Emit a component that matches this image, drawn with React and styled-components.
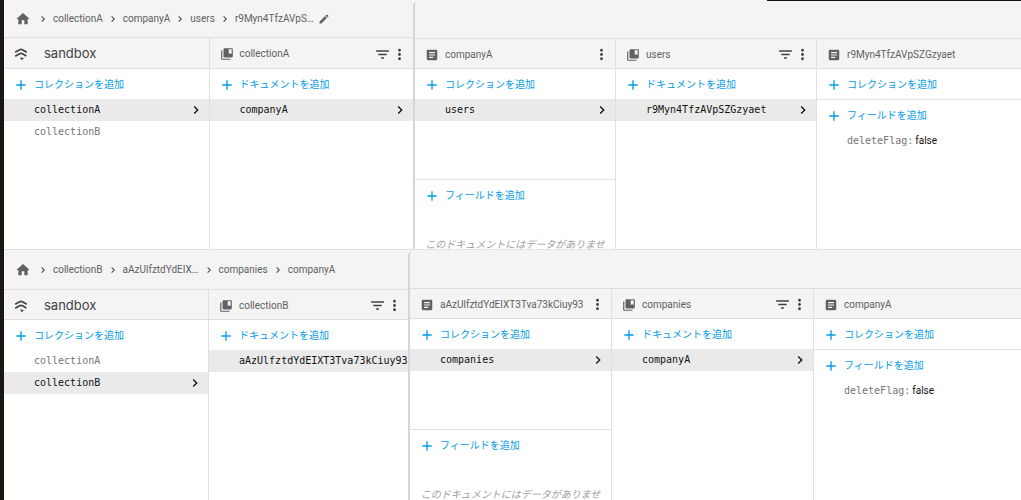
import React from "react";
import styled, { createGlobalStyle } from "styled-components";
import {
  MdAdd,
  MdArticle,
  MdChevronRight,
  MdCollectionsBookmark,
  MdEdit,
  MdFilterList,
  MdHome,
  MdMoreVert
} from "react-icons/md";

const GlobalStyle = createGlobalStyle`
  * {
    box-sizing: border-box;
  }

  body {
    margin: 0;
    background: #fff;
    color: #616161;
    font: 10px/16px Roboto, "Noto Sans CJK JP", sans-serif;
  }

  button {
    border: 0;
    padding: 0;
    background: none;
    color: inherit;
    font: inherit;
    cursor: pointer;
  }

  svg {
    display: block;
    flex: none;
  }
`;

const Page = styled.main`
  position: relative;
  display: grid;
  grid-template-rows: 1fr 1fr;
  height: 100vh;
  border-left: 4px solid #1c1613;
  overflow: hidden;
`;

const TopEdge = styled.div`
  position: absolute;
  top: 0;
  right: 0;
  width: 25%;
  height: 1px;
  background: #151215;
`;

const Row = styled.div`
  display: grid;
  grid-template-columns: ${props => props.$columns};
  min-height: 0;
  overflow: hidden;

  & + & {
    box-shadow: 0 -1px 0 #dfe1e3;
  }
`;

const Window = styled.section`
  display: flex;
  flex-direction: column;
  min-width: 0;
  min-height: 0;
  overflow: hidden;

  & + & {
    border-left: 2px solid #d3d7dc;
    border-top-left-radius: 5px;
  }
`;

const Toolbar = styled.nav`
  display: flex;
  align-items: center;
  gap: 4px;
  flex: none;
  height: ${props => props.$height}px;
  padding-left: 11px;
  border-bottom: 1px solid #dedede;
  background: #f4f4f4;

  a {
    color: #616161;
    text-decoration: none;
    white-space: nowrap;
  }

  .home {
    margin-right: 2px;
  }

  .separator {
    color: #424242;
  }
`;

const Columns = styled.div`
  display: grid;
  grid-template-columns: ${props => props.$columns};
  flex: 1;
  min-height: 0;
`;

const Column = styled.div`
  min-width: 0;
  overflow: hidden;

  & + & {
    border-left: 1px solid #e0e0e0;
  }
`;

const Header = styled.header`
  display: flex;
  align-items: center;
  height: ${props => props.$height}px;
  padding: 2px 5px 0 9px;
  border-bottom: 1px solid #dedede;
  background: #f4f4f4;
  white-space: nowrap;

  h2 {
    flex: 1;
    margin: 0;
    font-size: 10px;
    font-weight: 400;
  }

  h1 {
    margin: 0 0 2px 10px;
    color: #424242;
    font: 400 13px/16px Inter, sans-serif;
  }

  button {
    color: #424242;
  }
`;

const IconSlot = styled.span`
  display: flex;
  justify-content: center;
  flex: none;
  width: 16px;
  margin-right: 5px;
`;

const AddButton = styled.button`
  display: flex;
  align-items: center;
  width: 100%;
  height: 30px;
  padding: 1px 0 0 9px;
  color: #039be5;
  white-space: nowrap;
`;

const Collections = styled.div`
  height: ${props => (props.$tall ? "111px" : "auto")};
  border-bottom: 1px solid #e0e0e0;
`;

const List = styled.ul`
  margin: 0;
  padding: 0;
  list-style: none;
`;

const Item = styled.button`
  display: flex;
  align-items: center;
  justify-content: space-between;
  width: 100%;
  height: 22px;
  padding: 0 5px 0 30px;
  font-family: "DejaVu Sans Mono", monospace;
  white-space: nowrap;
  background: ${props => (props.$selected ? "#eaeaea" : "transparent")};
  color: ${props => (props.$selected ? "#111" : "#757575")};
`;

const Field = styled.div`
  display: flex;
  align-items: center;
  gap: 2px;
  height: 22px;
  padding-left: 30px;

  .key {
    color: #757575;
    font-family: "DejaVu Sans Mono", monospace;
  }

  .value {
    color: #111;
  }
`;

const Empty = styled.p`
  margin: 25px 0 0;
  color: #9e9e9e;
  font-style: italic;
  line-height: 20px;
  text-align: center;
  white-space: nowrap;
`;

const RootIcon = () => (
  <svg width="14" height="14" viewBox="0 0 14 14" fill="none" stroke="#424242" strokeWidth="1.7">
    <path d="M1.2 5.2L5.6 2.7Q7 2 8.4 2.7L12.8 5.2M1.2 9.2L5.6 6.8Q7 6.1 8.4 6.8L12.4 9" />
    <path d="M6.4 10.2L9 11.6L12 9.6L7.4 12.9Z" fill="#424242" stroke="none" />
    <path d="M6.2 10.4L10 11.2L7.6 12.8Z" fill="#424242" stroke="none" />
  </svg>
);

const Add = ({ children }) => (
  <AddButton type="button">
    <IconSlot>
      <MdAdd size={16} />
    </IconSlot>
    {children}
  </AddButton>
);

const Breadcrumbs = ({ path = [], height, editable }) => (
  <Toolbar $height={height}>
    {path.length > 0 && (
      <a className="home" href="#home" aria-label="home">
        <MdHome size={16} />
      </a>
    )}
    {path.map(name => (
      <React.Fragment key={name}>
        <MdChevronRight className="separator" size={12} />
        <a href={`#${name}`}>{name}</a>
      </React.Fragment>
    ))}
    {editable && (
      <button type="button" aria-label="edit">
        <MdEdit size={12} />
      </button>
    )}
  </Toolbar>
);

const Items = ({ items, selected, arrow = true }) => (
  <List>
    {items.map(name => (
      <li key={name}>
        <Item type="button" $selected={name === selected}>
          {name}
          {arrow && name === selected && <MdChevronRight size={16} />}
        </Item>
      </li>
    ))}
  </List>
);

const RootColumn = ({ items, selected, headerHeight }) => (
  <Column>
    <Header $height={headerHeight}>
      <IconSlot>
        <RootIcon />
      </IconSlot>
      <h1>sandbox</h1>
    </Header>
    <Add>コレクションを追加</Add>
    <Items items={items} selected={selected} />
  </Column>
);

const CollectionColumn = ({ name, item, arrow, headerHeight = 30 }) => (
  <Column>
    <Header $height={headerHeight}>
      <IconSlot>
        <MdCollectionsBookmark size={14} />
      </IconSlot>
      <h2>{name}</h2>
      <button type="button" aria-label="filter">
        <MdFilterList size={17} />
      </button>
      <button type="button" aria-label="menu">
        <MdMoreVert size={17} />
      </button>
    </Header>
    <Add>ドキュメントを追加</Add>
    <Items items={[item]} selected={item} arrow={arrow} />
  </Column>
);

const DocumentColumn = ({ name, item, fields = [] }) => (
  <Column>
    <Header $height={30}>
      <IconSlot>
        <MdArticle size={14} />
      </IconSlot>
      <h2>{name}</h2>
      {item && (
        <button type="button" aria-label="menu">
          <MdMoreVert size={17} />
        </button>
      )}
    </Header>
    <Collections $tall={Boolean(item)}>
      <Add>コレクションを追加</Add>
      {item && <Items items={[item]} selected={item} />}
    </Collections>
    <Add>フィールドを追加</Add>
    {fields.map(field => (
      <Field key={field.key}>
        <span className="key">{field.key}:</span>
        <span className="value">{field.value}</span>
      </Field>
    ))}
    {fields.length === 0 && <Empty>このドキュメントにはデータがありませ</Empty>}
  </Column>
);

const collections = ["collectionA", "collectionB"];
const fields = [{ key: "deleteFlag", value: "false" }];

const App = () => (
  <>
    <GlobalStyle />
    <Page>
      <Row $columns="409fr 608fr">
        <Window>
          <Breadcrumbs
            height={38}
            path={["collectionA", "companyA", "users", "r9Myn4TfzAVpS…"]}
            editable
          />
          <Columns $columns="1fr 1fr">
            <RootColumn items={collections} selected="collectionA" headerHeight={31} />
            <CollectionColumn name="collectionA" item="companyA" headerHeight={31} />
          </Columns>
        </Window>
        <Window>
          <Breadcrumbs height={39} />
          <Columns $columns="200fr 201fr 205fr">
            <DocumentColumn name="companyA" item="users" />
            <CollectionColumn name="users" item="r9Myn4TfzAVpSZGzyaet" />
            <DocumentColumn name="r9Myn4TfzAVpSZGzyaet" fields={fields} />
          </Columns>
        </Window>
      </Row>
      <Row $columns="404fr 613fr">
        <Window>
          <Breadcrumbs
            height={40}
            path={["collectionB", "aAzUlfztdYdEIX…", "companies", "companyA"]}
          />
          <Columns $columns="204fr 200fr">
            <RootColumn items={collections} selected="collectionB" headerHeight={30} />
            <CollectionColumn
              name="collectionB"
              item="aAzUlfztdYdEIXT3Tva73kCiuy93"
              arrow={false}
            />
          </Columns>
        </Window>
        <Window>
          <Breadcrumbs height={39} />
          <Columns $columns="201fr 202fr 208fr">
            <DocumentColumn name="aAzUlfztdYdEIXT3Tva73kCiuy93" item="companies" />
            <CollectionColumn name="companies" item="companyA" />
            <DocumentColumn name="companyA" fields={fields} />
          </Columns>
        </Window>
      </Row>
      <TopEdge />
    </Page>
  </>
);

export default App;
